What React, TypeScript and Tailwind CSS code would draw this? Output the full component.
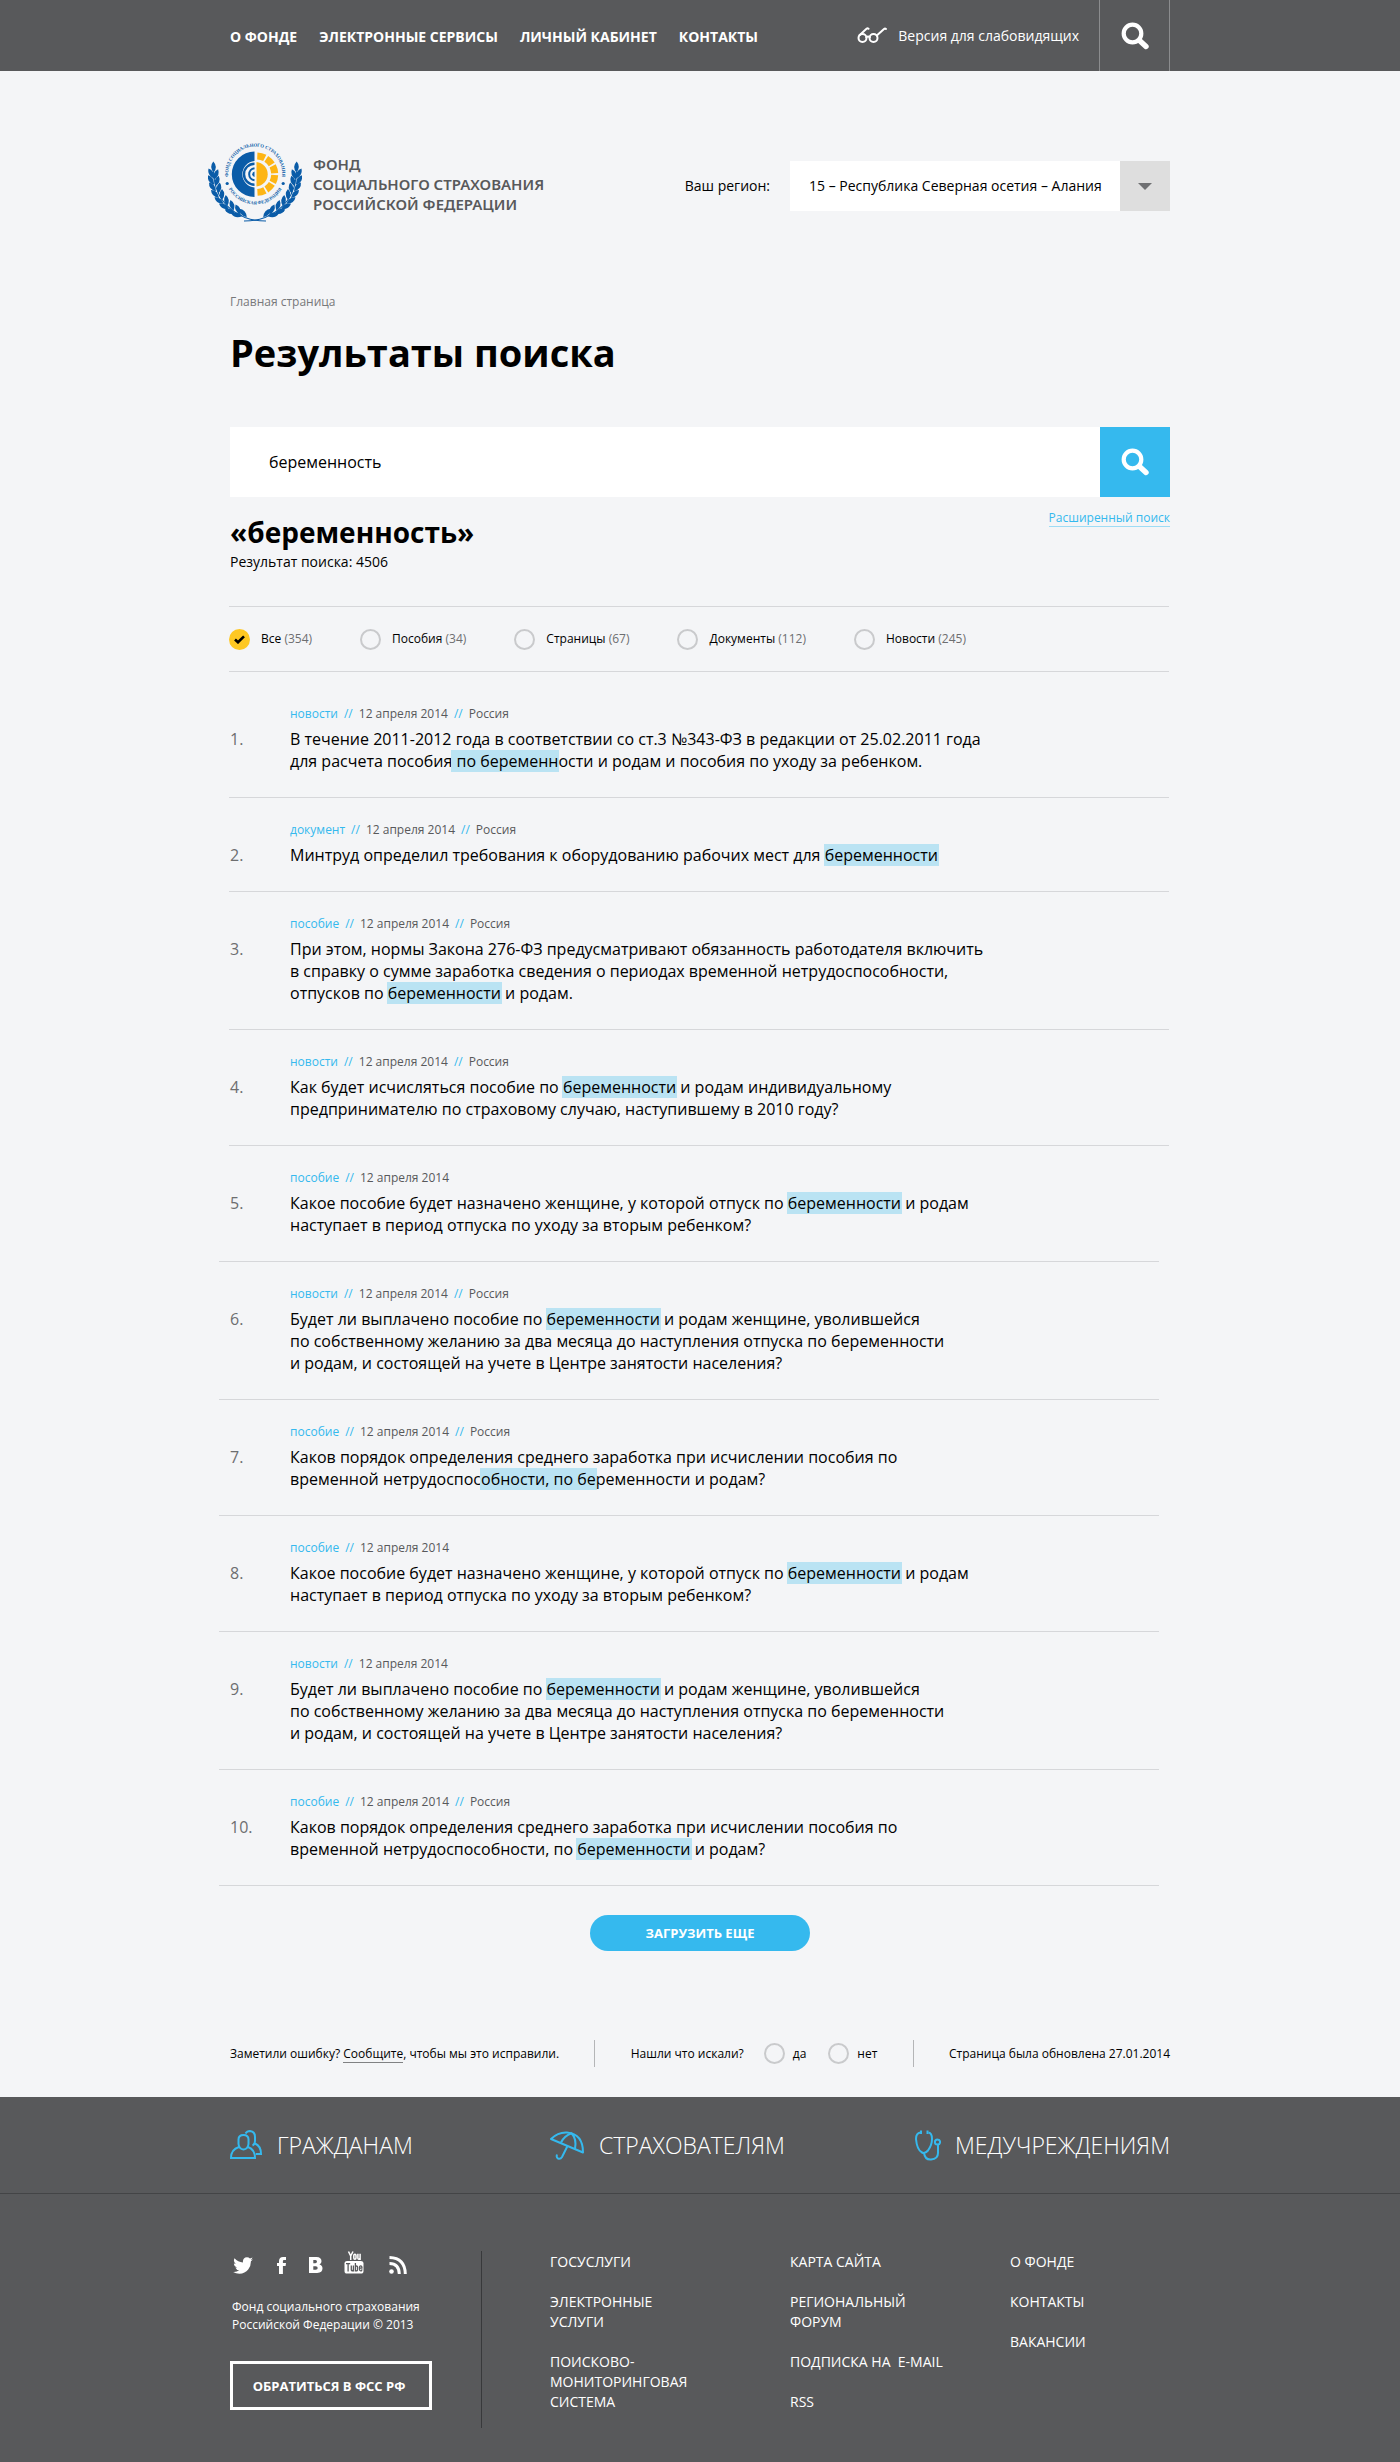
import React from "react";

const BLUE = "#35b9ee";

type Part = string | { mark: string };
interface Result {
  kind: string;
  place?: string;
  lines: Part[][];
}

const results: Result[] = [
  {
    kind: "новости",
    place: "Россия",
    lines: [
      ["В течение 2011-2012 года в соответствии со ст.3 №343-ФЗ в редакции от 25.02.2011 года"],
      ["для расчета пособия", { mark: " по беременн" }, "ости и родам и пособия по уходу за ребенком."],
    ],
  },
  {
    kind: "документ",
    place: "Россия",
    lines: [["Минтруд определил требования к оборудованию рабочих мест для ", { mark: "беременности" }]],
  },
  {
    kind: "пособие",
    place: "Россия",
    lines: [
      ["При этом, нормы Закона 276-ФЗ предусматривают обязанность работодателя включить"],
      ["в справку о сумме заработка сведения о периодах временной нетрудоспособности,"],
      ["отпусков по ", { mark: "беременности" }, " и родам."],
    ],
  },
  {
    kind: "новости",
    place: "Россия",
    lines: [
      ["Как будет исчисляться пособие по ", { mark: "беременности" }, " и родам индивидуальному"],
      ["предпринимателю по страховому случаю, наступившему в 2010 году?"],
    ],
  },
  {
    kind: "пособие",
    lines: [
      ["Какое пособие будет назначено женщине, у которой отпуск по ", { mark: "беременности" }, " и родам"],
      ["наступает в период отпуска по уходу за вторым ребенком?"],
    ],
  },
  {
    kind: "новости",
    place: "Россия",
    lines: [
      ["Будет ли выплачено пособие по ", { mark: "беременности" }, " и родам женщине, уволившейся"],
      ["по собственному желанию за два месяца до наступления отпуска по беременности"],
      ["и родам, и состоящей на учете в Центре занятости населения?"],
    ],
  },
  {
    kind: "пособие",
    place: "Россия",
    lines: [
      ["Каков порядок определения среднего заработка при исчислении пособия по"],
      ["временной нетрудоспос", { mark: "обности, по бе" }, "ременности и родам?"],
    ],
  },
  {
    kind: "пособие",
    lines: [
      ["Какое пособие будет назначено женщине, у которой отпуск по ", { mark: "беременности" }, " и родам"],
      ["наступает в период отпуска по уходу за вторым ребенком?"],
    ],
  },
  {
    kind: "новости",
    lines: [
      ["Будет ли выплачено пособие по ", { mark: "беременности" }, " и родам женщине, уволившейся"],
      ["по собственному желанию за два месяца до наступления отпуска по беременности"],
      ["и родам, и состоящей на учете в Центре занятости населения?"],
    ],
  },
  {
    kind: "пособие",
    place: "Россия",
    lines: [
      ["Каков порядок определения среднего заработка при исчислении пособия по"],
      ["временной нетрудоспособности, по ", { mark: "беременности" }, " и родам?"],
    ],
  },
];

const filters = [
  { name: "Все", count: 354 },
  { name: "Пособия", count: 34 },
  { name: "Страницы", count: 67 },
  { name: "Документы", count: 112 },
  { name: "Новости", count: 245 },
];

function SearchIcon() {
  return (
    <svg width="28" height="28" viewBox="0 0 28 28" fill="none" stroke="#fff" aria-hidden="true">
      <circle cx="11.5" cy="11.5" r="8.8" strokeWidth="4.2" />
      <path d="M18.5 18.5L25 24.5" strokeWidth="5.4" strokeLinecap="round" />
    </svg>
  );
}

function Glasses() {
  return (
    <svg width="30" height="17" viewBox="0 0 30 17" fill="none" stroke="#fff" strokeWidth="2" aria-hidden="true">
      <circle cx="5.5" cy="11" r="4" />
      <circle cx="16.5" cy="11" r="4" />
      <path d="M9.3 10.2Q11 9 12.8 10.2M2.5 8.2L9.5 1.8Q10.5 1 11.5 1.8M19.8 8.6L27 2Q28 1.2 29 2" strokeLinecap="round" />
    </svg>
  );
}

function Branch() {
  const leaves = [
    [5.5, 24, -2],
    [3.2, 30.5, -28],
    [8, 31.5, 22],
    [3, 37, -32],
    [9, 38, 18],
    [4.5, 44, -38],
    [11, 45, 8],
    [7, 51, -46],
    [14, 51.5, 0],
    [11, 57.5, -54],
    [18.5, 57.5, -8],
    [16, 63.5, -62],
    [24, 62.5, -16],
    [22, 68.5, -70],
    [30, 66.5, -26],
    [29, 72, -80],
    [35, 70, -42],
  ];
  return (
    <g>
      {leaves.map(([x, y, r], i) => (
        <path key={i} d="M0 -5.6Q4.6 -0.5 0 5.6Q-4.6 -0.5 0 -5.6Z" transform={`translate(${x} ${y}) rotate(${r})`} fill="#0a5ca8" />
      ))}
      <path d="M5.5 29Q7 62 37 74.5Q46 78 58 78" fill="none" stroke="#0a5ca8" strokeWidth="1.1" />
    </g>
  );
}

function Emblem() {
  const rays = [-90, -60, -30, 0, 30, 60];
  return (
    <svg width="94" height="84" viewBox="0 -4 94 84" className="shrink-0" role="img" aria-label="Эмблема фонда">
      <defs>
        <path id="arcTop" d="M21.4 38.5A27 27 0 1 1 73 38.5" />
        <path id="arcBottom" d="M19 42A30.200 30.200 0 0 0 75.400 42" />
      </defs>
      <Branch />
      <g transform="translate(94 0) scale(-1 1)">
        <Branch />
      </g>
      <text fill="#0a5ca8" fontFamily="'Liberation Serif', serif" fontWeight="700" fontSize="4.7">
        <textPath href="#arcTop" startOffset="50%" textAnchor="middle">
          ФОНД СОЦИАЛЬНОГО СТРАХОВАНИЯ
        </textPath>
      </text>
      <text fill="#0a5ca8" fontFamily="'Liberation Serif', serif" fontWeight="700" fontSize="4.6">
        <textPath href="#arcBottom" startOffset="50%" textAnchor="middle">
          РОССИЙСКАЯ ФЕДЕРАЦИЯ
        </textPath>
      </text>
      <circle cx="19.2" cy="40.5" r="1.6" fill="#0a5ca8" />
      <circle cx="75.2" cy="40.5" r="1.6" fill="#0a5ca8" />
      <g transform="translate(0 -2)">
        <path d="M46.500 10.500A22.700 22.700 0 0 0 46.500 55.900V46.500A13.300 13.300 0 0 1 46.500 20Z" fill="#0a5ca8" />
        <g fill="none" stroke="#0a5ca8">
          <path d="M46.500 22.700A10.500 10.500 0 0 0 46.500 43.700" strokeWidth="2.400" />
          <path d="M46.500 27.200A6.100 6.100 0 0 0 46.500 39.300" strokeWidth="2" />
        </g>
        <path d="M46.500 30.500A2.800 2.800 0 0 0 46.500 36Z" fill="#0a5ca8" />
        <path d="M48.500 21A12.300 12.300 0 0 1 48.500 45.500Z" fill="#fdb515" />
        <g fill="none" stroke="#fdb515" strokeWidth="7">
          {rays.map((a) => {
            const rad = Math.PI / 180;
            const start = (a + 2.5) * rad;
            const end = (a + 27) * rad;
            const r = 18.2;
            return (
              <path
                key={a}
                d={`M${48.5 + r * Math.cos(start)} ${33.2 + r * Math.sin(start)}A${r} ${r} 0 0 1 ${48.5 + r * Math.cos(end)} ${33.2 + r * Math.sin(end)}`}
              />
            );
          })}
        </g>
      </g>
    </svg>
  );
}

function People() {
  return (
    <svg width="32" height="30" viewBox="0 0 32 30" fill="none" stroke={BLUE} strokeWidth="2" aria-hidden="true">
      <path d="M8.500 9.500Q8.500 5 13.500 5T18.500 9.500V14Q18 19 13.500 19.500Q9 19 8.500 14Z" />
      <path d="M9 17Q1 19.500 1 28H25Q25 19.500 18 17" />
      <path d="M15.500 3.500Q17 1 20 1Q25 1.500 25 7V11Q25 14.500 22.500 15.500M25 13.500Q31 16 31 24H26" />
    </svg>
  );
}

function Umbrella() {
  return (
    <svg width="35" height="29" viewBox="0 0 35 29" fill="none" stroke={BLUE} strokeWidth="2" strokeLinejoin="round" aria-hidden="true">
      <path d="M1 8Q8 1 17 1.500Q33 3 33 21.500L1 8Z" />
      <path d="M11 11.500Q14 5 21.500 2.200Q27 8 25 18" />
      <path d="M17.500 15L12 26Q10.500 28.500 8 27.500Q6 26.500 7 23.500" />
    </svg>
  );
}

function Stethoscope() {
  return (
    <svg width="26" height="31" viewBox="0 0 26 31" fill="none" stroke={BLUE} strokeWidth="2" aria-hidden="true">
      <path d="M5.500 2.500Q1 3 1 9Q2 20 7 22.500Q10 24 13 20.500Q17 15 17 9Q17 3 13.500 2.500" />
      <path d="M6 0.500V4M12.500 0.500V4" />
      <path d="M9 23Q10 30 16 29.500Q23 29 23 23V14.500" />
      <circle cx="22.500" cy="12" r="2.600" />
    </svg>
  );
}

function Twitter() {
  return (
    <svg width="20" height="17" viewBox="0 0 20 17" fill="#fff" aria-hidden="true">
      <path d="M20 2.200q-1 .5-2.200.6 1.300-.8 1.700-2.200-1.200.7-2.500 1Q15.700.3 14 .3q-4 .2-4.100 4.200v.9Q5 5.200 1.500 1.300q-1.600 3.300 1.200 5.500-1 0-1.800-.5 0 3.200 3.300 4.100-.9.300-1.800.1 1 2.700 3.800 2.800Q3.600 15.300.1 15q2.800 1.800 6.300 1.800 5.600-.1 8.800-4.200 2.800-3.500 2.700-8.300 1.300-1 2.100-2.100z" />
    </svg>
  );
}

function Facebook() {
  return (
    <svg width="9" height="17" viewBox="0 0 9 17" fill="#fff" aria-hidden="true">
      <path d="M2 17V9H0V6h2V4Q2.200.2 6 0h3v3H7Q5.900 3 5.900 4v2H9l-.4 3H5.900v8z" />
    </svg>
  );
}

function Vk() {
  return (
    <svg width="14" height="17" viewBox="0 0 14 17" fill="#fff" fillRule="evenodd" aria-hidden="true">
      <path d="M0 0h7.500q5 .2 5 4.200 0 2.500-2 3.300 3 .9 3 4 0 4-5.300 4.500H0zM4.300 3v3.300h2q1.700 0 1.700-1.700T6.300 3zM4.300 9.200v3.600h2.500q1.900 0 1.900-1.800T6.800 9.200z" />
    </svg>
  );
}

function YouTube() {
  return (
    <svg width="20" height="23" viewBox="0 0 20 23" aria-hidden="true">
      <g fill="none" stroke="#fff" strokeWidth="1.500">
        <path d="M4.500 .5L6.700 5V9M9 .5L6.700 5" />
        <rect x="9.800" y="3.300" width="2.200" height="4.900" rx="1.100" />
        <path d="M13.900 2.800V7q0 1.500 1.300 1 .8-.4.900-1.200M16.100 2.800V9" />
      </g>
      <rect x="0.500" y="10" width="19" height="12.500" rx="2.600" fill="#fff" />
      <g fill="none" stroke="#58595b" strokeWidth="1.300">
        <path d="M2 12.700H6.200M4.100 12.700V20.500M7.300 14.500V19q.2 1.200 1.200.6l.9-.9M9.400 14.500V20.500M11.400 12V20.500M11.400 15.500q2.100-1.200 2.100.5v3q-.2 1.500-2.100.4M17.900 18.300q-.1 1.700-1.200 1.600-1.200-.1-1.200-1.600V16q.1-1.200 1.200-1.200T17.900 16v1.200h-2.400" />
      </g>
    </svg>
  );
}

function Rss() {
  return (
    <svg width="18" height="18" viewBox="0 0 18 18" aria-hidden="true">
      <circle cx="2.500" cy="15.500" r="2.300" fill="#fff" />
      <path d="M0.500 7.500Q10 7.500 10.300 18M0.500 1.500Q16 2 16.300 18" fill="none" stroke="#fff" strokeWidth="3" />
    </svg>
  );
}

const radioClass =
  "size-[21px] shrink-0 appearance-none rounded-full border-2 border-[#c9cacc] checked:border-[#fec823] checked:bg-[#fec823]";

function Meta({ kind, place }: { kind: string; place?: string }) {
  return (
    <p className="flex gap-[6px] text-[12px] leading-4 text-[#58595b]">
      <a href="#" className="text-[#35b9ee]">{kind}</a>
      <span className="text-[#35b9ee]">//</span>
      <span>12 апреля 2014</span>
      {place && (
        <>
          <span className="text-[#35b9ee]">//</span>
          <span>{place}</span>
        </>
      )}
    </p>
  );
}

function FooterLinks({ items, className }: { items: string[][]; className: string }) {
  return (
    <ul className={"flex flex-col gap-5 pt-px text-[14px] leading-5 " + className}>
      {items.map((item) => (
        <li key={item[0]}>
          <a href="#" className="whitespace-pre">{item.join("\n")}</a>
        </li>
      ))}
    </ul>
  );
}

export default function App() {
  return (
    <div className="min-h-screen bg-[#f4f5f7] font-['Open_Sans',sans-serif] text-black">
      <header className="bg-[#58595b] text-white">
        <div className="mx-auto flex h-[71px] max-w-[940px] items-center">
          <nav className="flex gap-[22px] pt-[2px] text-[14px] leading-5 font-bold">
            <a href="#">О ФОНДЕ</a>
            <a href="#">ЭЛЕКТРОННЫЕ СЕРВИСЫ</a>
            <a href="#">ЛИЧНЫЙ КАБИНЕТ</a>
            <a href="#">КОНТАКТЫ</a>
          </nav>
          <a href="#" className="ml-auto flex items-center gap-[11px] text-[14px] leading-5">
            <Glasses />
            Версия для слабовидящих
          </a>
          <button type="button" aria-label="Поиск" className="ml-5 flex h-full w-[71px] items-center justify-center border-x border-[#8b8c8e]">
            <SearchIcon />
          </button>
        </div>
      </header>

      <main className="mx-auto max-w-[940px]">
        <div className="flex items-start justify-between pt-[68px]">
          <a href="#" className="-ml-[22px] flex gap-[11px]">
            <Emblem />
            <span className="pt-[15px] font-['Noto_Sans',sans-serif] text-[15px] leading-5 font-semibold text-[#58595b]">
              ФОНД
              <br />
              СОЦИАЛЬНОГО СТРАХОВАНИЯ
              <br />
              РОССИЙСКОЙ ФЕДЕРАЦИИ
            </span>
          </a>
          <div className="mt-[22px] flex items-center gap-5 text-[14px] leading-5">
            <label htmlFor="region">Ваш регион:</label>
            <span className="relative flex h-[50px] w-[380px]">
              <select id="region" className="w-full appearance-none bg-white pr-[50px] pl-[19px]">
                <option>15 – Республика Северная осетия – Алания</option>
              </select>
              <span className="pointer-events-none absolute inset-y-0 right-0 flex w-[50px] items-center justify-center bg-[#dedede]">
                <svg width="14" height="7" viewBox="0 0 14 7" aria-hidden="true">
                  <path d="M0 0H14L7 7Z" fill="#6f7072" />
                </svg>
              </span>
            </span>
          </div>
        </div>

        <a href="#" className="mt-[71px] block text-[12px] leading-4 text-[#77787a]">Главная страница</a>
        <h1 className="mt-[14px] text-[38px] leading-[56px] font-bold">Результаты поиска</h1>

        <form className="mt-[47px] flex h-[70px]" onSubmit={(e) => e.preventDefault()}>
          <input aria-label="Поисковый запрос" defaultValue="беременность" className="min-w-0 flex-1 bg-white px-[39px] text-[16px]" />
          <button type="submit" aria-label="Найти" className="flex w-[70px] items-center justify-center bg-[#35b9ee]">
            <SearchIcon />
          </button>
        </form>

        <div className="flex items-start justify-between">
          <div>
            <h2 className="mt-[15px] text-[28px] leading-10 font-bold">«беременность»</h2>
            <p className="text-[14px] leading-5">Результат поиска: 4506</p>
          </div>
          <a href="#" className="mt-[13px] border-b border-[#9edcf5] text-[12px] leading-4 text-[#35b9ee]">Расширенный поиск</a>
        </div>

        <section className="mr-px -ml-px">
          <fieldset className="mt-[34px] flex h-[66px] items-center gap-12 border-y border-[#d6d7da] text-[12px] leading-4">
            {filters.map((f, i) => (
              <label key={f.name} className="flex items-center gap-[11px]">
                <span className="relative flex">
                  <input type="radio" name="filter" defaultChecked={i === 0} className={"peer " + radioClass} />
                  <svg width="11" height="9" viewBox="0 0 11 9" className="absolute top-[6px] left-[5px] hidden peer-checked:block" aria-hidden="true">
                    <path d="M1 4.500L4 7.300L10 1.400" fill="none" stroke="#000" strokeWidth="2.600" />
                  </svg>
                </span>
                <span>
                  {f.name} <span className="text-[#6d6e70]">({f.count})</span>
                </span>
              </label>
            ))}
          </fieldset>

          <ol className="pt-[10px]">
            {results.map((r, i) => (
              <li
                key={i}
                className={(i > 3 ? "-ml-[10px] mr-[10px] pl-[11px] " : "pl-px ") + "flex border-b border-[#d6d7da] pt-6 pb-[25px]"}
              >
                <span className="w-[60px] shrink-0 pt-[22px] text-[16px] leading-[22px] text-[#6d6e70]">{i + 1}.</span>
                <div>
                  <Meta kind={r.kind} place={r.place} />
                  <p className="mt-[6px] text-[16px] leading-[22px]">
                    {r.lines.map((line, n) => (
                      <span key={n} className="block whitespace-pre">
                        {line.map((p, k) =>
                          typeof p === "string" ? p : <mark key={k} className="-mx-px bg-[#bae3f3] px-px text-black">{p.mark}</mark>
                        )}
                      </span>
                    ))}
                  </p>
                </div>
              </li>
            ))}
          </ol>
        </section>

        <button type="button" className="mx-auto mt-[29px] block h-9 w-[220px] rounded-full bg-[#35b9ee] text-[13px] leading-5 font-bold text-white">
          ЗАГРУЗИТЬ ЕЩЕ
        </button>

        <div className="mt-[89px] flex h-[27px] items-center justify-between text-[12px] leading-4">
          <p>
            Заметили ошибку? <a href="#" className="border-b border-[#808183]">Сообщите</a>, чтобы мы это исправили.
          </p>
          <span className="h-full w-px bg-[#b4b5b7]" />
          <fieldset className="flex items-center">
            <legend className="float-left mr-5">Нашли что искали?</legend>
            <label className="mr-[22px] flex items-center gap-2">
              <input type="radio" name="found" className={radioClass} />
              да
            </label>
            <label className="flex items-center gap-2">
              <input type="radio" name="found" className={radioClass} />
              нет
            </label>
          </fieldset>
          <span className="h-full w-px bg-[#b4b5b7]" />
          <p>Страница была обновлена 27.01.2014</p>
        </div>
      </main>

      <footer className="mt-[30px] bg-[#58595b] text-white">
        <div className="border-b border-[#434446]">
          <nav className="mx-auto flex h-[96px] max-w-[940px] items-center text-[23px] leading-8 font-light">
            <a href="#" className="flex w-[320px] items-center gap-[15px]">
              <People />
              ГРАЖДАНАМ
            </a>
            <a href="#" className="flex items-center gap-[14px]">
              <Umbrella />
              СТРАХОВАТЕЛЯМ
            </a>
            <a href="#" className="ml-auto flex items-center gap-[14px]">
              <Stethoscope />
              МЕДУЧРЕЖДЕНИЯМ
            </a>
          </nav>
        </div>
        <div className="mx-auto flex max-w-[940px] pt-[57px] pb-[35px]">
          <div className="w-[252px] border-r border-[#38393b] pb-[18px]">
            <div className="flex h-[23px] items-end pl-[3px]">
              <a href="#" aria-label="Twitter" className="mr-[24px]"><Twitter /></a>
              <a href="#" aria-label="Facebook" className="mr-[23px]"><Facebook /></a>
              <a href="#" aria-label="ВКонтакте" className="mr-[21px]"><Vk /></a>
              <a href="#" aria-label="YouTube" className="mr-[25px]"><YouTube /></a>
              <a href="#" aria-label="RSS"><Rss /></a>
            </div>
            <p className="mt-[24px] pl-[2px] text-[12px] leading-[18px]">
              Фонд социального страхования
              <br />
              Российской Федерации © 2013
            </p>
            <button type="button" className="mt-[27px] h-[49px] w-[202px] border-[3px] border-white pr-1 text-[13px] leading-5 font-bold">
              ОБРАТИТЬСЯ В ФСС РФ
            </button>
          </div>
          <FooterLinks className="w-[308px] pl-[68px]" items={[["ГОСУСЛУГИ"], ["ЭЛЕКТРОННЫЕ", "УСЛУГИ"], ["ПОИСКОВО-", "МОНИТОРИНГОВАЯ", "СИСТЕМА"]]} />
          <FooterLinks className="w-[220px]" items={[["КАРТА САЙТА"], ["РЕГИОНАЛЬНЫЙ", "ФОРУМ"], ["ПОДПИСКА НА  E-MAIL"], ["RSS"]]} />
          <FooterLinks className="" items={[["О ФОНДЕ"], ["КОНТАКТЫ"], ["ВАКАНСИИ"]]} />
        </div>
      </footer>
    </div>
  );
}
